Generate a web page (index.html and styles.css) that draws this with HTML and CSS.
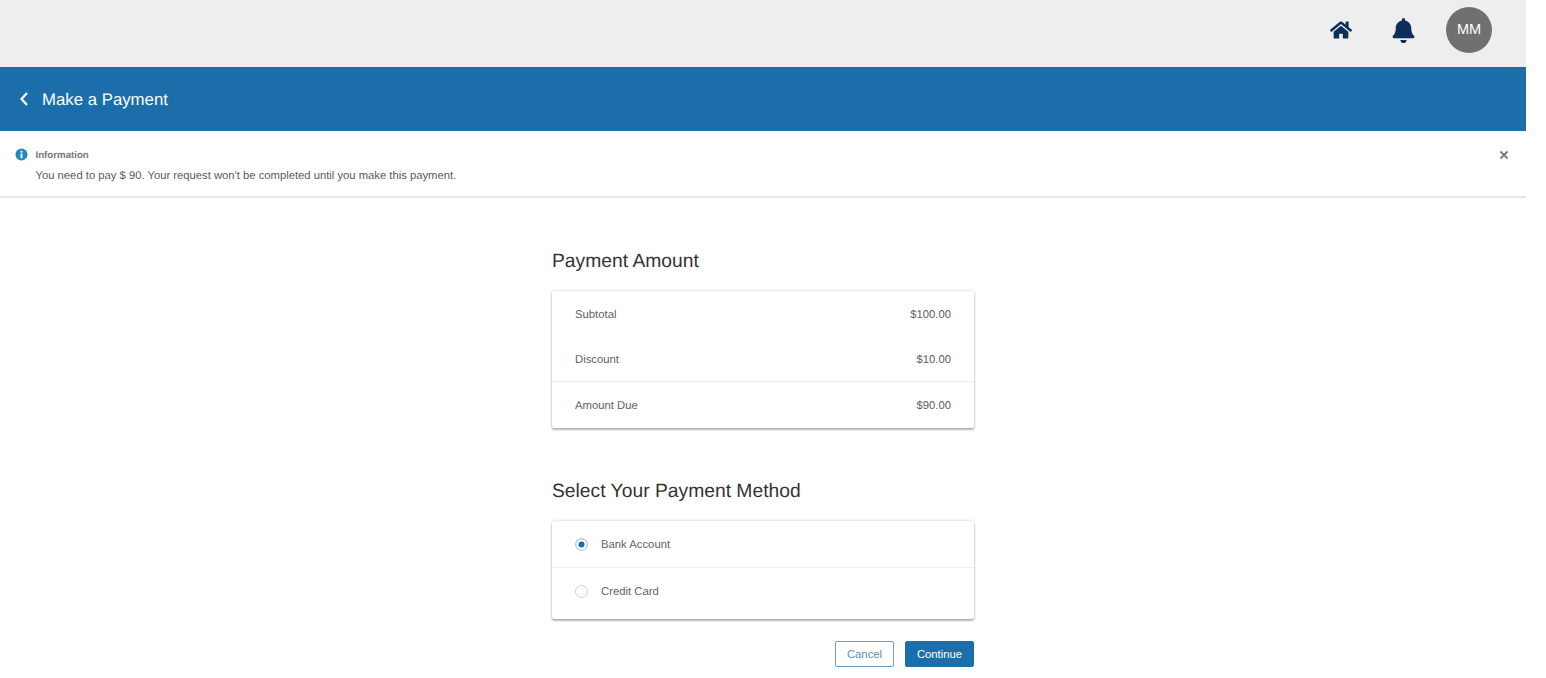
FILE: index.html
```html
<!DOCTYPE html>
<html lang="en">
<head>
<meta charset="utf-8">
<title>Make a Payment</title>
<link rel="stylesheet" href="styles.css">
</head>
<body>
<div class="page">
  <header class="topbar">
    <svg class="icon-home" viewBox="0 0 576 512" aria-hidden="true"><path d="M280.4 148.3 96 300.1V464a16 16 0 0 0 16 16l112.100-.3a16 16 0 0 0 15.900-16V368a16 16 0 0 1 16-16h64a16 16 0 0 1 16 16v95.600a16 16 0 0 0 16 16.100L464 480a16 16 0 0 0 16-16V300L295.700 148.300a12.200 12.200 0 0 0-15.300 0zM571.600 251.500 488 182.600V44.100a12 12 0 0 0-12-12h-56a12 12 0 0 0-12 12v72.600L318.500 43a48 48 0 0 0-61 0L4.300 251.500a12 12 0 0 0-1.600 16.900l25.500 31A12 12 0 0 0 45.200 301l235.200-193.700a12.200 12.200 0 0 1 15.300 0L530.900 301a12 12 0 0 0 16.900-1.600l25.500-31a12 12 0 0 0-1.700-16.900z"/></svg>
    <svg class="icon-bell" viewBox="0 0 448 512" aria-hidden="true"><path d="M224 512c35.300 0 64-28.700 64-64H160c0 35.300 28.700 64 64 64zm215.400-149.700c-19.300-20.800-55.500-52-55.500-154.300 0-77.700-54.500-139.900-127.900-155.200V32a32 32 0 1 0-64 0v20.800C118.600 68.100 64.100 130.300 64.100 208c0 102.300-36.200 133.500-55.500 154.300A31.300 31.300 0 0 0 0 384c.1 16.400 13 32 32.100 32h383.800c19.100 0 32-15.600 32.100-32a31.200 31.200 0 0 0-8.600-21.700z"/></svg>
    <div class="avatar">MM</div>
  </header>

  <div class="titlebar">
    <svg class="icon-back" viewBox="0 0 10 16" aria-hidden="true"><path d="M8 2 2.500 8 8 14"/></svg>
    <h1 class="title">Make a Payment</h1>
  </div>

  <section class="alert">
    <svg class="icon-info" viewBox="0 0 14 14" aria-hidden="true"><circle cx="7" cy="7" r="6.500"/><rect class="info-mark" x="6" y="6" width="2" height="5"/><rect class="info-mark" x="6" y="3" width="2" height="2"/></svg>
    <div class="alert-body">
      <div class="alert-title">Information</div>
      <div class="alert-text">You need to pay $ 90. Your request won't be completed until you make this payment.</div>
    </div>
    <svg class="icon-close" viewBox="0 0 10 10" aria-hidden="true"><path d="M1.500 1.500l7 7M8.500 1.500l-7 7"/></svg>
  </section>

  <main class="content">
    <h2 class="heading">Payment Amount</h2>
    <div class="card">
      <div class="row row-sub"><span>Subtotal</span><span>$100.00</span></div>
      <div class="row row-disc"><span>Discount</span><span>$10.00</span></div>
      <div class="row row-due"><span>Amount Due</span><span>$90.00</span></div>
    </div>

    <h2 class="heading heading-method">Select Your Payment Method</h2>
    <div class="card">
      <div class="option option-first"><span class="radio radio-on"></span><span class="option-label">Bank Account</span></div>
      <div class="option option-last"><span class="radio"></span><span class="option-label">Credit Card</span></div>
    </div>

    <div class="actions">
      <button class="btn btn-outline" type="button">Cancel</button>
      <button class="btn btn-solid" type="button">Continue</button>
    </div>
  </main>
</div>
</body>
</html>
```
FILE: styles.css
```css
* { box-sizing: border-box; }
html, body { margin: 0; padding: 0; background: #fff; overflow: hidden; }
body { font-family: "Liberation Sans", Arial, sans-serif; color: #555; text-rendering: geometricPrecision; }
.page { width: 1526px; height: 678px; }

.topbar {
  height: 67px;
  background: #eeeeee;
  display: flex;
  align-items: center;
  justify-content: flex-end;
  padding: 0 34px 7px 0;
}
.icon-home { width: 22px; height: 20px; fill: #0b2f58; margin-right: 39.500px; }
.icon-bell { width: 23px; height: 25px; fill: #0b2f58; margin-right: 31.500px; }
.avatar {
  width: 46px; height: 46px; border-radius: 50%;
  background: #707070; color: #fff;
  font-size: 14.500px;
  display: flex; align-items: center; justify-content: center;
}

.titlebar {
  height: 64px;
  background: #1b6eaa;
  display: flex;
  align-items: center;
  padding-left: 19px;
}
.icon-back { width: 10px; height: 16px; fill: none; stroke: #fff; stroke-width: 2.200; margin-right: 13px; }
.title { margin: 1px 0 0; font-size: 16.800px; font-weight: 400; color: #fff; }

.alert {
  height: 67px;
  border-bottom: 2px solid #e6e6e6;
  display: flex;
  padding: 18px 17px 0 15px;
}
.icon-info { width: 13px; height: 13px; fill: #2389bd; margin: -1px 8px 0 0; }
.info-mark { fill: #fff; }
.alert-body { flex: 1; margin-left: -.5px; }
.alert-title { font-size: 9.700px; font-weight: 700; color: #777; line-height: 13px; }
.alert-text { font-size: 11.250px; color: #5a5a5a; line-height: 14px; margin-top: 7px; }
.icon-close { width: 10px; height: 10px; fill: none; stroke: #7a7a7a; stroke-width: 1.800; margin-top: 1px; }

.content { width: 422px; margin: 0 auto; padding-top: 49px; }
.heading { margin: 0; font-size: 19.300px; font-weight: 400; color: #333; line-height: 29px; }
.heading-method { margin-top: 49px; }
.card {
  margin-top: 15px;
  background: #fff;
  border-radius: 2px;
  box-shadow: 0 0 3px rgba(0,0,0,.22), 0 2px 2px rgba(0,0,0,.25);
  font-size: 11.300px;
  color: #5f5f5f;
}
.row { display: flex; justify-content: space-between; align-items: center; padding: 2px 23px 0; }
.row-sub { height: 46px; }
.row-disc { height: 45px; border-bottom: 1px solid #eeeeee; }
.row-due { height: 46px; }
.option { display: flex; align-items: center; gap: 13px; padding: 0 23px; }
.option-first { height: 47px; border-bottom: 1px solid #eeeeee; }
.option-last { height: 51px; padding-bottom: 5px; }
.option-label { padding-top: 2px; }
.radio {
  width: 13px; height: 13px; border-radius: 50%;
  border: 1px solid #cfcfcf;
  background: #fff;
  flex: none;
}
.radio-on { background: #0b6fc0; box-shadow: inset 0 0 0 2.500px #fff; }

.actions { display: flex; justify-content: flex-end; gap: 11px; margin-top: 22px; }
.btn { height: 26px; font-family: inherit; font-size: 11.300px; border-radius: 2px; padding: 0; }
.btn-outline { width: 59px; background: #fff; border: 1px solid #6b9fc4; color: #5d8eb5; }
.btn-solid { width: 69px; background: #1b6eaa; border: 1px solid #1b6eaa; color: #fff; }
```
